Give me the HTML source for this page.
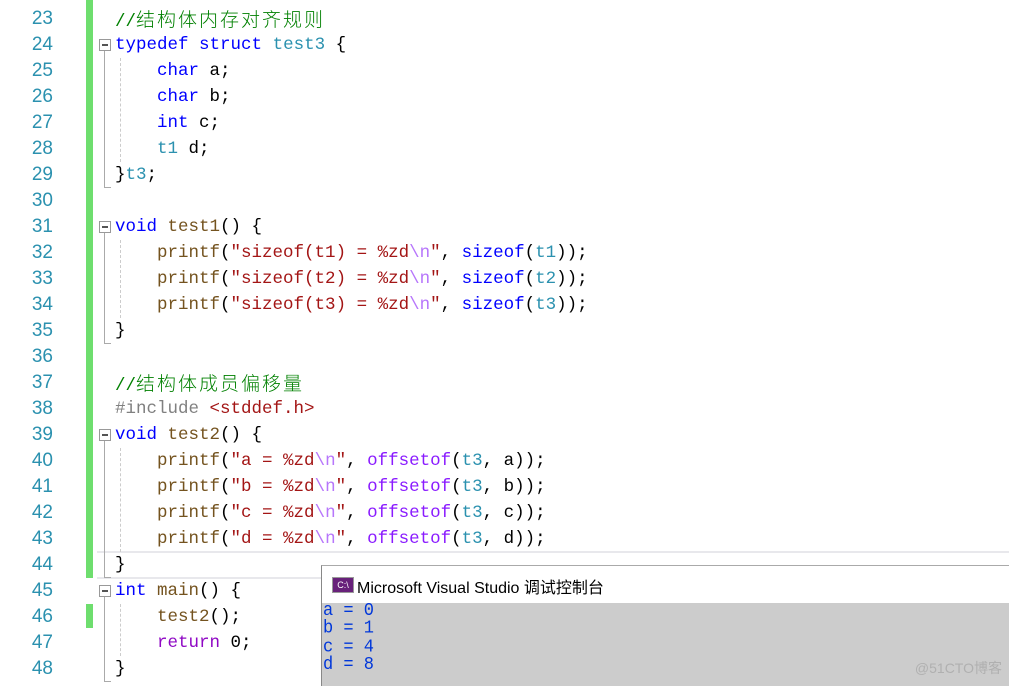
<!DOCTYPE html>
<html><head><meta charset="utf-8"><style>
body{margin:0;width:1009px;height:685px;overflow:hidden;background:#fff;position:relative;font-family:"Liberation Mono","Noto Sans CJK SC",monospace}
.ln{position:absolute;left:0;width:53px;text-align:right;font-family:"Liberation Sans",sans-serif;font-size:19px;color:#2b91af;line-height:26px}
.c{position:absolute;left:115px;font-size:17.5px;line-height:26px;white-space:pre;color:#000}
.k{color:#0000ff}.t{color:#2b91af}.s{color:#a31515}.e{color:#b776fb}.f{color:#74531f}.m{color:#8a1bff}.cm{color:#008000}.p{color:#808080}.r{color:#8f08c4}
.zh{font-family:"Noto Sans CJK SC",sans-serif;font-size:19px;letter-spacing:2px;font-weight:300}
.fold{position:absolute;left:99px;width:10px;height:10px;border:1px solid #999;background:#fff}
.fold:after{content:"";position:absolute;left:2px;top:4px;width:6px;height:2px;background:#555}
.vl{position:absolute;left:104px;border-left:1px solid #aaa}
.hl{position:absolute;left:104px;width:7px;border-top:1px solid #aaa}
.dg{position:absolute;left:120px;border-left:1px dashed #ccc}
</style></head><body>
<div style="position:absolute;left:86px;top:0;width:7px;height:578px;background:#6ede6e"></div>
<div style="position:absolute;left:86px;top:604px;width:7px;height:24px;background:#6ede6e"></div>
<div style="position:absolute;left:97px;top:551px;width:912px;height:24px;border-top:2px solid #e8e8ec;border-bottom:2px solid #e8e8ec"></div>

<div class="ln" style="top:-20px">22</div>
<div class="ln" style="top:6px">23</div><div class="ln" style="top:32px">24</div><div class="ln" style="top:58px">25</div><div class="ln" style="top:84px">26</div><div class="ln" style="top:110px">27</div><div class="ln" style="top:136px">28</div><div class="ln" style="top:162px">29</div><div class="ln" style="top:188px">30</div><div class="ln" style="top:214px">31</div><div class="ln" style="top:240px">32</div><div class="ln" style="top:266px">33</div><div class="ln" style="top:292px">34</div><div class="ln" style="top:318px">35</div><div class="ln" style="top:344px">36</div><div class="ln" style="top:370px">37</div><div class="ln" style="top:396px">38</div><div class="ln" style="top:422px">39</div><div class="ln" style="top:448px">40</div><div class="ln" style="top:474px">41</div><div class="ln" style="top:500px">42</div><div class="ln" style="top:526px">43</div><div class="ln" style="top:552px">44</div><div class="ln" style="top:578px">45</div><div class="ln" style="top:604px">46</div><div class="ln" style="top:630px">47</div><div class="ln" style="top:656px">48</div>

<div class="fold" style="top:39px"></div><div class="vl" style="top:51px;height:136px"></div><div class="hl" style="top:187px"></div><div class="dg" style="top:58px;height:104px"></div>
<div class="fold" style="top:221px"></div><div class="vl" style="top:233px;height:110px"></div><div class="hl" style="top:343px"></div><div class="dg" style="top:240px;height:78px"></div>
<div class="fold" style="top:429px"></div><div class="vl" style="top:441px;height:136px"></div><div class="hl" style="top:577px"></div><div class="dg" style="top:448px;height:104px"></div>
<div class="fold" style="top:585px"></div><div class="vl" style="top:597px;height:84px"></div><div class="hl" style="top:681px"></div><div class="dg" style="top:604px;height:52px"></div>

<div class="c cm" style="top:6px">//<span class="zh">结构体内存对齐规则</span></div>
<div class="c" style="top:32px"><span class="k">typedef</span> <span class="k">struct</span> <span class="t">test3</span> {</div>
<div class="c" style="top:58px">    <span class="k">char</span> a;</div>
<div class="c" style="top:84px">    <span class="k">char</span> b;</div>
<div class="c" style="top:110px">    <span class="k">int</span> c;</div>
<div class="c" style="top:136px">    <span class="t">t1</span> d;</div>
<div class="c" style="top:162px">}<span class="t">t3</span>;</div>
<div class="c" style="top:214px"><span class="k">void</span> <span class="f">test1</span>() {</div>
<div class="c" style="top:240px">    <span class="f">printf</span>(<span class="s">"sizeof(t1) = %zd</span><span class="e">\n</span><span class="s">"</span>, <span class="k">sizeof</span>(<span class="t">t1</span>));</div>
<div class="c" style="top:266px">    <span class="f">printf</span>(<span class="s">"sizeof(t2) = %zd</span><span class="e">\n</span><span class="s">"</span>, <span class="k">sizeof</span>(<span class="t">t2</span>));</div>
<div class="c" style="top:292px">    <span class="f">printf</span>(<span class="s">"sizeof(t3) = %zd</span><span class="e">\n</span><span class="s">"</span>, <span class="k">sizeof</span>(<span class="t">t3</span>));</div>
<div class="c" style="top:318px">}</div>
<div class="c cm" style="top:370px">//<span class="zh">结构体成员偏移量</span></div>
<div class="c" style="top:396px"><span class="p">#include</span> <span class="s">&lt;stddef.h&gt;</span></div>
<div class="c" style="top:422px"><span class="k">void</span> <span class="f">test2</span>() {</div>
<div class="c" style="top:448px">    <span class="f">printf</span>(<span class="s">"a = %zd</span><span class="e">\n</span><span class="s">"</span>, <span class="m">offsetof</span>(<span class="t">t3</span>, a));</div>
<div class="c" style="top:474px">    <span class="f">printf</span>(<span class="s">"b = %zd</span><span class="e">\n</span><span class="s">"</span>, <span class="m">offsetof</span>(<span class="t">t3</span>, b));</div>
<div class="c" style="top:500px">    <span class="f">printf</span>(<span class="s">"c = %zd</span><span class="e">\n</span><span class="s">"</span>, <span class="m">offsetof</span>(<span class="t">t3</span>, c));</div>
<div class="c" style="top:526px">    <span class="f">printf</span>(<span class="s">"d = %zd</span><span class="e">\n</span><span class="s">"</span>, <span class="m">offsetof</span>(<span class="t">t3</span>, d));</div>
<div class="c" style="top:552px">}</div>
<div class="c" style="top:578px"><span class="k">int</span> <span class="f">main</span>() {</div>
<div class="c" style="top:604px">    <span class="f">test2</span>();</div>
<div class="c" style="top:630px">    <span class="r">return</span> 0;</div>
<div class="c" style="top:656px">}</div>

<div style="position:absolute;left:321px;top:565px;width:688px;height:120px;border-left:1px solid #888;border-top:1px solid #aaa;background:#fff">
  <div style="position:absolute;left:10px;top:11px;width:20px;height:14px;background:#68217a;border:1px solid #999;color:#fff;font:9px 'Liberation Sans',sans-serif;text-align:center;line-height:14px">C:\</div>
  <div style="position:absolute;left:35px;top:8px;font:16px 'Liberation Sans','Noto Sans CJK SC',sans-serif;color:#000;white-space:nowrap">Microsoft Visual Studio 调试控制台</div>
  <div style="position:absolute;left:0;top:37px;width:688px;height:83px;background:#cccccc">
    <div style="position:absolute;left:1px;top:0;font:17px/16.4px 'Liberation Mono',monospace;color:#0037da;white-space:pre;transform:scaleY(1.1);transform-origin:top left">a = 0
b = 1
c = 4
d = 8</div>
    <div style="position:absolute;right:8px;top:55px;font:14px 'Liberation Sans','Noto Sans CJK SC',sans-serif;color:#b0b0b0">@51CTO博客</div>
  </div>
</div>
</body></html>
